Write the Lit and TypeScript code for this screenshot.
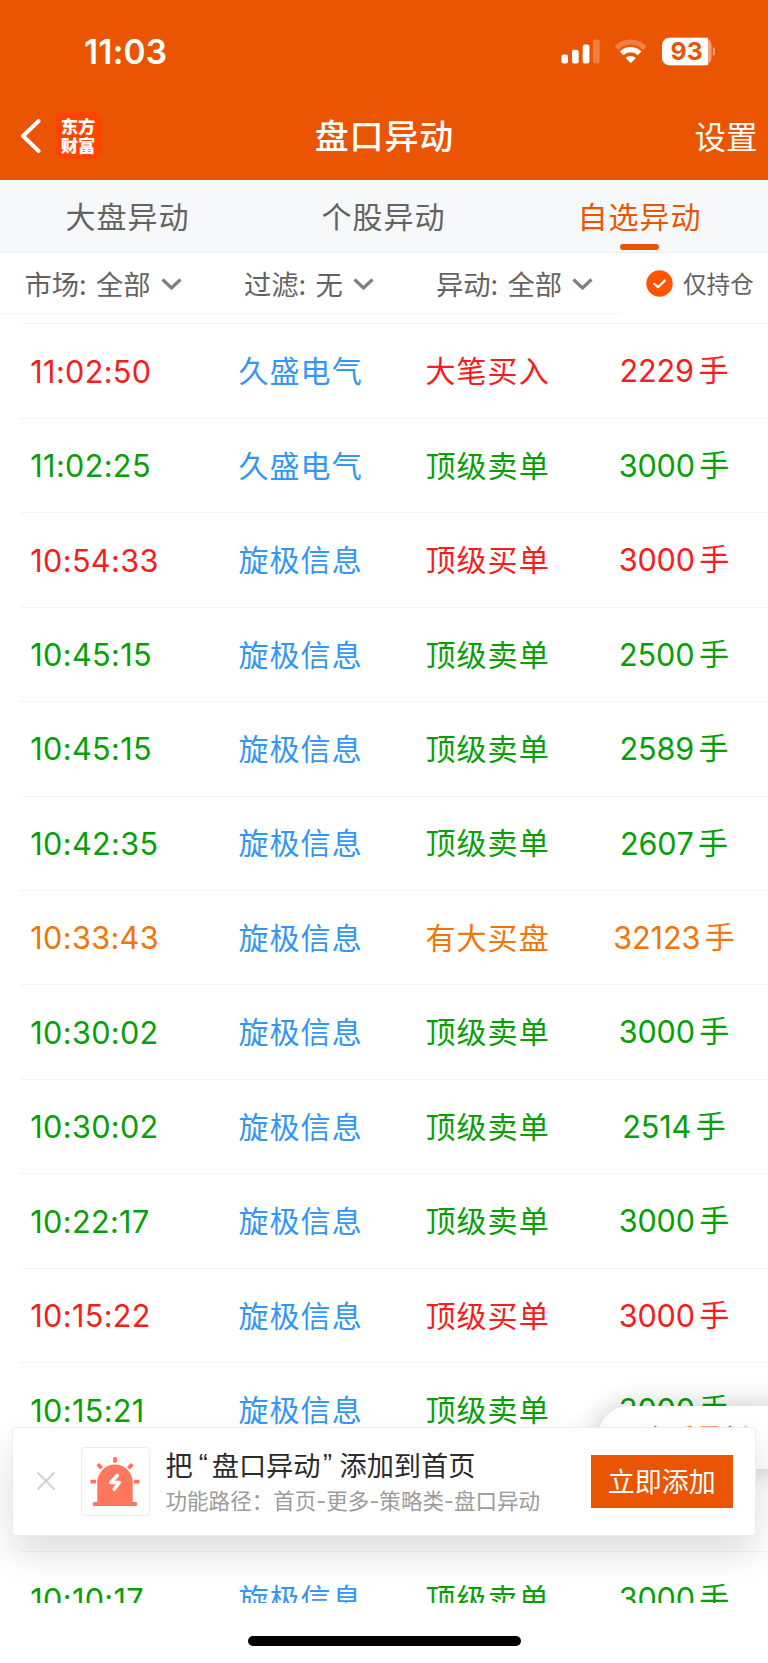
import { LitElement, html, css, svg } from "lit";
import { customElement, property } from "lit/decorators.js";
import { classMap } from "lit/directives/class-map.js";

type Tone = "red" | "green" | "orange";
interface Row { time: string; name: string; kind: string; vol: string; tone: Tone; }

const r = (time: string, name: string, kind: string, vol: string, tone: Tone): Row => ({ time, name, kind, vol, tone });

const ROWS: Row[] = [
  r("11:02:50", "久盛电气", "大笔买入", "2229", "red"),
  r("11:02:25", "久盛电气", "顶级卖单", "3000", "green"),
  r("10:54:33", "旋极信息", "顶级买单", "3000", "red"),
  r("10:45:15", "旋极信息", "顶级卖单", "2500", "green"),
  r("10:45:15", "旋极信息", "顶级卖单", "2589", "green"),
  r("10:42:35", "旋极信息", "顶级卖单", "2607", "green"),
  r("10:33:43", "旋极信息", "有大买盘", "32123", "orange"),
  r("10:30:02", "旋极信息", "顶级卖单", "3000", "green"),
  r("10:30:02", "旋极信息", "顶级卖单", "2514", "green"),
  r("10:22:17", "旋极信息", "顶级卖单", "3000", "green"),
  r("10:15:22", "旋极信息", "顶级买单", "3000", "red"),
  r("10:15:21", "旋极信息", "顶级卖单", "3000", "green"),
  r("", "", "", "", "green"),
  r("10:10:17", "旋极信息", "顶级卖单", "3000", "green"),
];

@customElement("status-bar")
class StatusBar extends LitElement {
  static styles = css`
    :host { display: flex; height: 103px; padding: 0 53px 0 84px; align-items: center; justify-content: space-between; box-sizing: border-box; color: #fff; }
    .clock { font: 600 33.4px/40px Inter, sans-serif; letter-spacing: 0.2px; font-kerning: none; }
    .icons { display: block; }
    .pct { font: 700 24.8px Inter, sans-serif; letter-spacing: 0; }
  `;
  render() {
    return html`
      <span class="clock">11:03</span>
      <svg class="icons" width="156" height="30" viewBox="0 0 156 30" fill="#fff">
        <rect x="2.5" y="17.5" width="6.5" height="9" rx="2" />
        <rect x="13" y="12.8" width="6.7" height="13.7" rx="2" />
        <rect x="23.7" y="7.5" width="6.7" height="19" rx="2" />
        <rect x="34" y="2.5" width="6.7" height="24" rx="2" opacity=".25" />
        <g fill="none" stroke="#fff" stroke-width="5.2">
          <path d="M57.3 11.1 A20 20 0 0 1 86 11.1" opacity=".25" />
          <path d="M62.6 16.3 A13 13 0 0 1 80.6 16.3" />
        </g>
        <path d="M71.7 26.2 L66.6 21.1 A7.4 7.4 0 0 1 76.8 21.1 Z" />
        <rect x="103" y="0.8" width="49.5" height="27.4" rx="7.5" opacity=".45" />
        <path d="M110.5 .8 H149 V28.2 H110.5 A7.5 7.5 0 0 1 103 20.7 V8.3 A7.5 7.5 0 0 1 110.5 .8Z" />
        <path d="M153.8 10 q3.2 1.4 3.2 4.5 t-3.2 4.5z" opacity=".45" />
        <text class="pct" x="127.6" y="23.2" text-anchor="middle" fill="#ea5504">93</text>
      </svg>`;
  }
}

@customElement("nav-bar")
class NavBar extends LitElement {
  static styles = css`
    :host { display: grid; grid-template-columns: 1fr auto 1fr; height: 76.5px; align-items: center; padding-bottom: 13px; box-sizing: border-box; color: #fff; font-family: "Noto Sans CJK SC", sans-serif; }
    .left { display: flex; align-items: center; gap: 13.5px; padding: 2px 0 0 21px; }
    .logo { width: 47px; height: 47px; border-radius: 9px; background: #ff4400; display: grid; align-content: center; justify-items: center; font-weight: 900; font-size: 17.3px; line-height: 19.3px; padding-bottom: 1px; box-sizing: border-box; }
    .title { font-weight: 500; font-size: 34px; line-height: 48px; letter-spacing: .8px; margin-right: -.8px; }
    .set { justify-self: end; font-size: 31.5px; line-height: 46px; margin-right: 10.5px; }
  `;
  render() {
    return html`
      <div class="left">
        <svg width="20" height="34" viewBox="0 0 20 34" fill="none" stroke="#fff" stroke-width="3.9" stroke-linecap="round" stroke-linejoin="round"><path d="M17.6 2 L2 17 L17.6 32" /></svg>
        <div class="logo"><span>东方</span><span>财富</span></div>
      </div>
      <div class="title">盘口异动</div>
      <div class="set">设置</div>`;
  }
}

@customElement("filter-item")
class FilterItem extends LitElement {
  @property() label = "";
  @property() value = "";
  static styles = css`
    :host { display: flex; align-items: center; font: 27.3px/40px "Noto Sans CJK SC", sans-serif; color: #636363; white-space: nowrap; }
    .value { margin-left: 9.2px; }
    svg { margin-left: 10.5px; margin-top: 2px; }
  `;
  render() {
    return html`<span>${this.label}:</span><span class="value">${this.value}</span>
      <svg width="21" height="13" viewBox="0 0 21 13" fill="none" stroke="#808080" stroke-width="3.2"><path d="M1.5 1.5 L10.5 10 L19.5 1.5" /></svg>`;
  }
}

@customElement("event-list")
class EventList extends LitElement {
  static styles = css`
    :host { display: block; height: 1279.7px; overflow: hidden; font: 30px/44px Inter, "Noto Sans CJK SC", sans-serif; }
    .row { display: grid; grid-template-columns: 186px 188px 186px 188px; height: 94.46px; margin-left: 20px; box-sizing: border-box; border-top: 1.5px solid #f4f4f4; align-items: center; }
    .cjk { font-family: "Noto Sans CJK SC", sans-serif; letter-spacing: 1.1px; text-align: center; padding: 0 0 3.6px 1.2px; }
    .time { padding: 1.2px 0 0 10.3px; font-size: 30.6px; letter-spacing: 0.35px; font-kerning: none; }
    .vol { display: flex; justify-content: center; gap: 4.5px; }
    .num { font-size: 30.6px; letter-spacing: -0.15px; font-kerning: none; padding-top: 2.5px; }
    .unit { font-family: "Noto Sans CJK SC", sans-serif; padding-bottom: 5px; margin-top: -0.5px; }
    .name { color: #3396f3; }
    .red { color: #f71c20; }
    .green { color: #06a006; }
    .orange { color: #f27507; }
  `;
  render() {
    return ROWS.map((e) => {
      const tone = { red: e.tone === "red", green: e.tone === "green", orange: e.tone === "orange" };
      return html`<div class="row">
        <div class=${classMap({ time: true, ...tone })}>${e.time}</div>
        <div class="cjk name">${e.name}</div>
        <div class=${classMap({ cjk: true, ...tone })}>${e.kind}</div>
        <div class=${classMap({ vol: true, ...tone })}>${e.vol ? html`<span class="num">${e.vol}</span><span class="unit">手</span>` : ""}</div>
      </div>`;
    });
  }
}

@customElement("add-banner")
class AddBanner extends LitElement {
  static styles = css`
    :host { display: flex; align-items: center; box-sizing: border-box; background: #fff; border: 1px solid #eee; border-radius: 4px; padding: 0 22.3px 0 23px; font-family: "Noto Sans CJK SC", sans-serif; box-shadow: 0 18px 36px rgba(0,0,0,.13); }
    .badge { width: 68.5px; height: 68.5px; margin-left: 25px; border: 1px solid #ededed; border-radius: 4px; box-sizing: border-box; }
    .badge svg { display: block; margin: -1px; }
    .copy { flex: 1; margin-left: 16px; white-space: nowrap; }
    .head { font: 27.2px/38px "Noto Sans CJK SC", sans-serif; color: #2b2b2b; display: flex; }
    .q { font-family: "Liberation Sans", sans-serif; width: 19px; text-align: center; box-sizing: border-box; }
    .q.open { padding-left: 2px; }
    .q.close { padding-right: 5px; }
    .path { font: 21.5px/34px Inter, "Noto Sans CJK SC", sans-serif; letter-spacing: 0.05px; color: #9c9c9c; padding-top: 1.2px; }
    .btn { width: 142px; height: 53px; background: #ea5504; color: #fff; font-size: 27px; line-height: 51.5px; text-align: center; }
  `;
  render() {
    const ray = (a: number) => svg`<rect x="32.1" y="10" width="3.8" height="5.8" rx="1" transform="rotate(${a} 34 34.6)" />`;
    return html`
      <svg width="20" height="20" viewBox="0 0 20 20" stroke="#cfd2d8" stroke-width="2"><path d="M1.5 1.5 L18.5 18.5 M18.5 1.5 L1.5 18.5" /></svg>
      <div class="badge">
        <svg width="68" height="68" viewBox="0 0 68 68" fill="#ff775e">
          ${[-90, -45, 0, 45, 90].map(ray)}
          <path d="M16.3 55 V35.2 A17.7 17.7 0 0 1 51.7 35.2 V55 H54.5 A2 2 0 0 1 54.5 59 H13.5 A2 2 0 0 1 13.5 55 Z" />
          <path d="M36.2 28.5 L29.8 35.5 H38.2 L33.2 42.3" fill="none" stroke="#fff" stroke-width="3.6" stroke-linecap="round" stroke-linejoin="round" />
        </svg>
      </div>
      <div class="copy">
        <div class="head"><span>把</span><span class="q open">“</span><span>盘口异动</span><span class="q close">”</span><span>添加到首页</span></div>
        <div class="path">功能路径：首页-更多-策略类-盘口异动</div>
      </div>
      <div class="btn">立即添加</div>`;
  }
}

@customElement("app-root")
class AppRoot extends LitElement {
  static styles = css`
    :host { display: block; position: relative; width: 768px; height: 1663px; overflow: hidden; background: #fff; font-family: "Noto Sans CJK SC", sans-serif; }
    .top { background: #ea5504; height: 179.5px; }
    .tabs { display: grid; grid-template-columns: repeat(3, 256px); height: 73.5px; box-sizing: border-box; background: #f7f8fa; border-bottom: 1.5px solid #eeeff0; }
    .tab { display: flex; flex-direction: column; align-items: center; padding: 13.5px 1px 0 0; font-size: 30px; line-height: 44px; letter-spacing: 1px; color: #636363; }
    .tab.on { color: #ea5504; }
    .tab.on::after { content: ""; width: 39px; height: 6px; border-radius: 3px; background: #ea5504; margin-top: 7px; }
    .filters { display: grid; grid-template-columns: 219.5px 192px 186px 1fr; height: 70.3px; box-sizing: border-box; padding-left: 24.5px; }
    .cell { display: flex; align-items: center; height: 60px; border-bottom: 1.5px solid #f6f6f6; }
    .cell.first { margin-left: -24.5px; padding-left: 24.5px; }
    .only { display: flex; align-items: center; height: 60px; gap: 10px; padding-left: 24px; font-size: 23.6px; color: #636363; }
    .latest { position: absolute; left: 598px; top: 1406px; width: 190px; height: 63px; box-sizing: border-box; border-radius: 31px 0 0 31px; background: #fff; box-shadow: 0 0 28px rgba(0,0,0,.22); padding-left: 44px; font-size: 27px; line-height: 63px; color: #ff5500; white-space: nowrap; }
    .banner { position: absolute; left: 12px; top: 1427px; width: 744px; height: 108.5px; }
    .bottom { position: relative; height: 60px; display: flex; justify-content: center; align-items: flex-end; box-sizing: border-box; padding-bottom: 17px; }
    .home { width: 273px; height: 10px; border-radius: 5px; background: #000; }
  `;
  render() {
    return html`
      <div class="top"><status-bar></status-bar><nav-bar></nav-bar></div>
      <div class="tabs">
        <div class="tab">大盘异动</div><div class="tab">个股异动</div><div class="tab on">自选异动</div>
      </div>
      <div class="filters">
        <div class="cell first"><filter-item label="市场" value="全部"></filter-item></div>
        <div class="cell"><filter-item label="过滤" value="无"></filter-item></div>
        <div class="cell"><filter-item label="异动" value="全部"></filter-item></div>
        <div class="only">
          <svg width="27" height="27" viewBox="0 0 27 27"><circle cx="13.5" cy="13.5" r="13.2" fill="#ff5500" /><path d="M8.2 13.8 L12 17.3 L18.8 10.6" fill="none" stroke="#fff" stroke-width="2.2" stroke-linecap="round" stroke-linejoin="round" /></svg>
          <span>仅持仓</span>
        </div>
      </div>
      <event-list></event-list>
      <div class="bottom"><div class="home"></div></div>
      <div class="latest">查看最新</div>
      <add-banner class="banner"></add-banner>`;
  }
}
